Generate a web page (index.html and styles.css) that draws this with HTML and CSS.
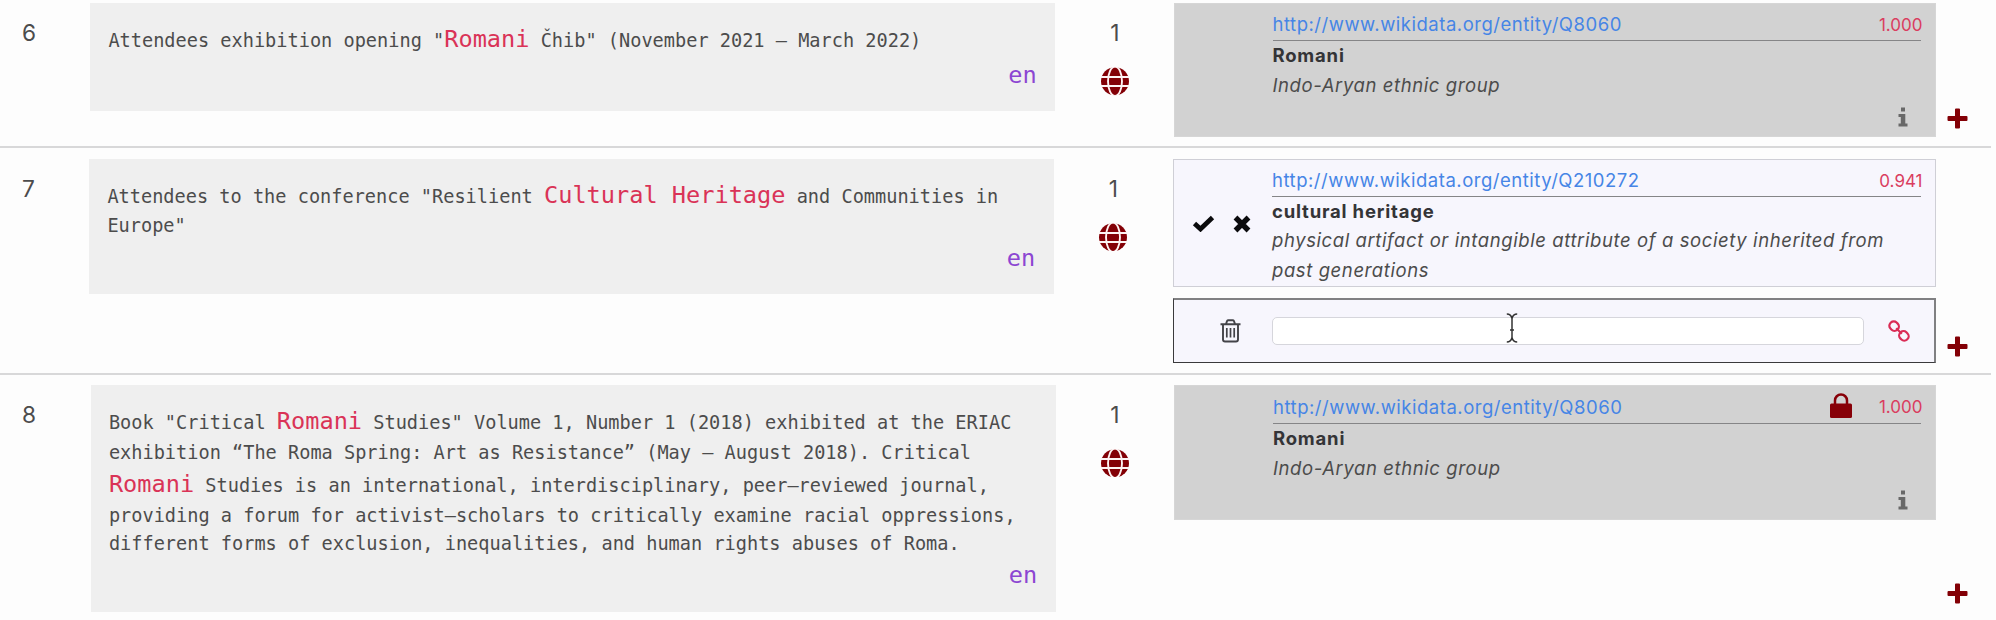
FILE: index.html
```html
<!DOCTYPE html>
<html lang="en">
<head>
<meta charset="utf-8">
<title>Annotations</title>
<link rel="stylesheet" href="styles.css">
</head>
<body>
<svg class="defs" aria-hidden="true">
  <symbol id="globe" viewBox="0 0 28 28">
    <ellipse cx="14" cy="14" rx="14" ry="14" fill="#830006"/>
    <g fill="none" stroke="#fdf3f3" stroke-width="1.9">
      <ellipse cx="14" cy="14" rx="7" ry="14.6"/>
      <path d="M0 9.7h28M0 18.7h28"/>
    </g>
  </symbol>
  <symbol id="plus" viewBox="0 0 21 21">
    <path d="M9 0.5h3a1 1 0 0 1 1 1V8h6.500a1 1 0 0 1 1 1v3a1 1 0 0 1-1 1H13v6.500a1 1 0 0 1-1 1H9a1 1 0 0 1-1-1V13H1.500a1 1 0 0 1-1-1V9a1 1 0 0 1 1-1H8V1.500a1 1 0 0 1 1-1z" fill="#830006"/>
  </symbol>
  <symbol id="info" viewBox="0 0 10 20">
    <path d="M3 0.500h4v4H3zM0.500 7H7.300v9.500H9.500V19.500H0.500V16.500H2.800V10H0.500z" fill="#686868"/>
  </symbol>
</svg>
<main class="rows">
  <section class="row row-6">
    <div class="number">6</div>
    <div class="text">
      <div>Attendees exhibition opening "<mark>Romani</mark> Čhib" (November 2021 – March 2022)</div>
      <div class="lang">en</div>
    </div>
    <div class="count"><span>1</span><svg class="globe"><use href="#globe"/></svg></div>
    <div class="cards">
      <article class="card locked">
        <div class="body">
          <div class="head"><a>http://www.wikidata.org/entity/Q8060</a><span class="score">1.000</span></div>
          <div class="label">Romani</div>
          <div class="desc">Indo-Aryan ethnic group</div>
          <svg class="info"><use href="#info"/></svg>
        </div>
      </article>
    </div>
    <div class="add"><svg class="plus"><use href="#plus"/></svg></div>
  </section>
  <section class="row row-7">
    <div class="number">7</div>
    <div class="text">
      <div>Attendees to the conference "Resilient <mark>Cultural Heritage</mark> and Communities in<br>Europe"</div>
      <div class="lang">en</div>
    </div>
    <div class="count"><span>1</span><svg class="globe"><use href="#globe"/></svg></div>
    <div class="cards">
      <article class="card">
        <div class="actions">
          <svg class="check" viewBox="0 0 23 17"><path d="M2.500 8.500L8.500 14L20.500 2.500" fill="none" stroke="#0b0b0d" stroke-width="4.800"/></svg>
          <svg class="cross" viewBox="0 0 18 18"><path d="M2.500 2.500L15.500 15.500M15.500 2.500L2.500 15.500" fill="none" stroke="#0b0b0d" stroke-width="5.400"/></svg>
        </div>
        <div class="body">
          <div class="head"><a>http://www.wikidata.org/entity/Q210272</a><span class="score">0.941</span></div>
          <div class="label">cultural heritage</div>
          <div class="desc">physical artifact or intangible attribute of a society inherited from<br>past generations</div>
        </div>
      </article>
      <div class="card editor">
        <svg class="trash" viewBox="0 0 21 24"><g fill="none" stroke="#434348" stroke-width="1.900"><path d="M0.500 5.200h20M6 5L7 2.200Q7.400 1.300 8.400 1.300h4.200q1 0 1.400.9L15 5M3 5.500V20.500q0 2 2 2h11q2 0 2-2V5.500"/><path d="M6.800 9v9.500M10.500 9v9.500M14.200 9v9.500" stroke-width="1.700"/></g></svg>
        <div class="field" role="textbox" aria-label="Entity"><svg class="caret" viewBox="0 0 12 30"><path d="M0.800 1Q5 1 6 5.500Q7 1 11.200 1M6 5v20M0.800 29Q5 29 6 24.500Q7 29 11.200 29M4 17h4" fill="none" stroke="#333" stroke-width="1.500"/></svg></div>
        <svg class="link" viewBox="0 0 22 22"><g fill="none" stroke="#da2c55" stroke-width="2.200"><rect x="1.300" y="1.800" width="9.600" height="8.600" rx="4" transform="rotate(45 6.100 6.100)"/><rect x="11.100" y="11.600" width="9.600" height="8.600" rx="4" transform="rotate(45 15.900 15.900)"/><path d="M8.200 8.200l5.600 5.600"/></g></svg>
      </div>
    </div>
    <div class="add"><svg class="plus"><use href="#plus"/></svg></div>
  </section>
  <section class="row row-8">
    <div class="number">8</div>
    <div class="text">
      <div>Book "Critical <mark>Romani</mark> Studies" Volume 1, Number 1 (2018) exhibited at the ERIAC<br>exhibition “The Roma Spring: Art as Resistance” (May – August 2018). Critical<br><mark>Romani</mark> Studies is an international, interdisciplinary, peer–reviewed journal,<br>providing a forum for activist–scholars to critically examine racial oppressions,<br>different forms of exclusion, inequalities, and human rights abuses of Roma.</div>
      <div class="lang">en</div>
    </div>
    <div class="count"><span>1</span><svg class="globe"><use href="#globe"/></svg></div>
    <div class="cards">
      <article class="card locked">
        <div class="body">
          <div class="head"><a>http://www.wikidata.org/entity/Q8060</a><svg class="lock" viewBox="0 0 22 25"><path d="M5 12V7.500a6 6 0 0 1 12 0V12" fill="none" stroke="#870008" stroke-width="2.500"/><rect y="10.500" width="22" height="14.500" rx="1.500" fill="#870008"/></svg><span class="score">1.000</span></div>
          <div class="label">Romani</div>
          <div class="desc">Indo-Aryan ethnic group</div>
          <svg class="info"><use href="#info"/></svg>
        </div>
      </article>
    </div>
    <div class="add"><svg class="plus"><use href="#plus"/></svg></div>
  </section>
</main>
</body>
</html>
```
FILE: styles.css
```css
* { box-sizing: border-box; }
body {
  margin: 0;
  height: 620px;
  overflow: hidden;
  background: #fdfdfd;
  color: #4c4c4c;
  font-family: Inter, "Liberation Sans", sans-serif;
}
svg { display: block; flex: none; }
.defs { position: absolute; width: 0; height: 0; }
.rows { width: 1991px; }
.row {
  display: grid;
  grid-template-columns: 90px 965px 118.500px 762px 1fr;
  align-items: start;
  border-bottom: 2px solid #d8d8d9;
}
.row-6 { height: 148px; padding-top: 2.500px; }
.row-7 { height: 227px; padding-top: 11px; grid-template-columns: 89px 964.500px 119.500px 762.500px 1fr; }
.row-8 { height: 245px; padding-top: 10px; border-bottom: 0; grid-template-columns: 90.500px 965px 118.500px 761.500px 1fr; }
.number, .count {
  font-size: 22.700px;
  line-height: 34px;
  padding-top: 13.500px;
}
.row-7 .number, .row-7 .count, .row-8 .number, .row-8 .count { padding-top: 12.500px; }
.number { padding-left: 22px; }
.count { display: flex; flex-direction: column; align-items: center; gap: 17px; }
.row-6 .count { padding-left: 1px; }
.globe { width: 28px; height: 28.500px; }
.text {
  padding: 19.200px 18.400px 18px;
  background: #efefef;
  font-family: "DejaVu Sans Mono", monospace;
  font-size: 18.600px;
  line-height: 1.5;
}
.row-7 .text { padding-bottom: 18px; }
.row-8 .text { padding: 18.800px 18.400px 18px; }
mark { background: none; color: #da3357; font-size: 23.600px; }
.row-7 mark { line-height: 34px; }
.lang { text-align: right; color: #8c46d2; font-size: 23.600px; }
.row-6 .lang, .row-7 .lang { padding-top: 1px; }
.card {
  display: grid;
  grid-template-columns: 98px 1fr;
  padding: 5.800px 14px 1px 0;
  border: 1px solid #cfcfd6;
  background: #f7f6fd;
  font-size: 18.500px;
  line-height: 29.300px;
}
.locked { height: 134.500px; padding-top: 6.400px; background: #d2d2d2; border-color: #d6d6d6; }
.body { grid-column: 2; }
.head { display: flex; align-items: center; height: 31.200px; border-bottom: 1.500px solid #858587; }
.head a { color: #4685e6; margin-right: auto; white-space: nowrap; letter-spacing: 0.520px; }
.score { color: #da3d5f; font-size: 17px; margin-right: -2px; padding-top: 1px; }
.lock { width: 22px; height: 25px; margin: 0 27px 4px 0; }
.label { color: #343437; font-weight: 700; letter-spacing: 0.800px; }
.desc { font-style: italic; white-space: nowrap; letter-spacing: 0.590px; }
.locked .desc { padding-top: 0.700px; }
.info { width: 10px; height: 20px; margin: 7px 13px 0 auto; }
.actions { display: flex; align-items: center; align-self: start; gap: 18px; padding: 49px 0 0 18px; }
.check { width: 23px; height: 17px; }
.cross { width: 18px; height: 18px; }
.editor {
  grid-template-columns: 98px 592px 1fr;
  align-items: center;
  height: 65px;
  margin-top: 11.500px;
  padding: 0;
  border-style: solid;
  border-width: 2px 2px 1px 1px;
  border-color: #808082 #808082 #3a3a3c #3a3a3c;
}
.trash { width: 21px; height: 24px; margin-left: 45.500px; }
.field {
  display: flex;
  height: 28px;
  border: 1.500px solid #d6d6dc;
  border-radius: 5px;
  background: #fff;
}
.caret { width: 12px; height: 30px; margin: -5px 0 0 233px; }
.link { width: 22px; height: 22px; margin-left: 24px; }
.add { align-self: end; padding-left: 11.500px; }
.plus { width: 21px; height: 21px; }
.row-6 .add { margin-bottom: 17px; }
.row-7 .add { margin-bottom: 16px; }
.row-8 .add { margin-bottom: 16px; }
```
